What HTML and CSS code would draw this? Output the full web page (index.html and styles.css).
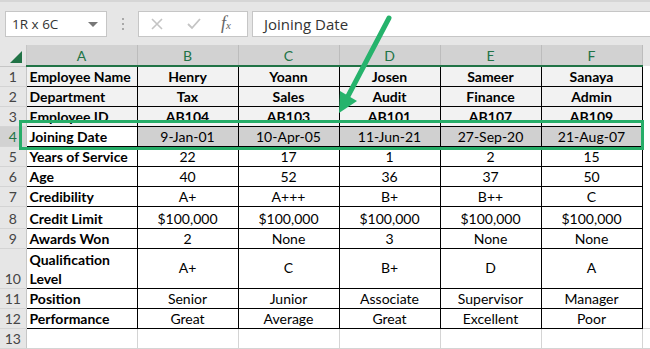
FILE: index.html
```html
<!DOCTYPE html>
<html lang="en">
<head>
  <meta charset="UTF-8" />
  <title>Employee sheet</title>
  <link rel="stylesheet" href="styles.css">
</head>
<body>
  <div class="app">
    <!-- formula bar -->
    <div class="toolbar">
      <div class="namebox">
        <span>1R x 6C</span>
        <span class="drop"></span>
      </div>
      <div class="grip"><i></i><i></i><i></i></div>
      <div class="fxbox">
        <svg width="12" height="12" viewBox="0 0 12 12"><path d="M1 1 L11 11 M11 1 L1 11" stroke="#c4c4c4" stroke-width="1.6" fill="none"/></svg>
        <svg width="14" height="12" viewBox="0 0 14 12"><path d="M1 6 L5 10 L13 1" stroke="#c4c4c4" stroke-width="1.8" fill="none"/></svg>
        <span class="fx">f<sub>x</sub></span>
      </div>
      <div class="formula">Joining Date</div>
    </div>

    <!-- grid -->
    <div class="sheet">
      <table class="grid">
        <colgroup>
          <col class="c-row"><col class="c-a"><col class="c-n"><col class="c-n"><col class="c-n"><col class="c-n"><col class="c-n"><col class="c-rest">
        </colgroup>
        <thead>
          <tr>
            <th class="corner"><span class="tri"></span></th>
            <th class="col">A</th><th class="col">B</th><th class="col">C</th><th class="col">D</th><th class="col">E</th><th class="col">F</th>
            <th class="rest"></th>
          </tr>
        </thead>
        <tbody>
          <tr class="top">
            <th>1</th><td class="lbl">Employee Name</td><td class="b">Henry</td><td class="b">Yoann</td><td class="b">Josen</td><td class="b">Sameer</td><td class="b">Sanaya</td><td class="rest"></td>
          </tr>
          <tr class="top">
            <th>2</th><td class="lbl">Department</td><td class="b">Tax</td><td class="b">Sales</td><td class="b">Audit</td><td class="b">Finance</td><td class="b">Admin</td><td class="rest"></td>
          </tr>
          <tr class="top">
            <th>3</th><td class="lbl">Employee ID</td><td class="b">AB104</td><td class="b">AB103</td><td class="b">AB101</td><td class="b">AB107</td><td class="b">AB109</td><td class="rest"></td>
          </tr>
          <tr class="sel">
            <th>4</th><td class="lbl">Joining Date</td><td>9-Jan-01</td><td>10-Apr-05</td><td>11-Jun-21</td><td>27-Sep-20</td><td>21-Aug-07</td><td class="rest"></td>
          </tr>
          <tr>
            <th>5</th><td class="lbl">Years of Service</td><td>22</td><td>17</td><td>1</td><td>2</td><td>15</td><td class="rest"></td>
          </tr>
          <tr>
            <th>6</th><td class="lbl">Age</td><td>40</td><td>52</td><td>36</td><td>37</td><td>50</td><td class="rest"></td>
          </tr>
          <tr>
            <th>7</th><td class="lbl">Credibility</td><td>A+</td><td>A+++</td><td>B+</td><td>B++</td><td>C</td><td class="rest"></td>
          </tr>
          <tr class="r22">
            <th>8</th><td class="lbl">Credit Limit</td><td>$100,000</td><td>$100,000</td><td>$100,000</td><td>$100,000</td><td>$100,000</td><td class="rest"></td>
          </tr>
          <tr>
            <th>9</th><td class="lbl">Awards Won</td><td>2</td><td>None</td><td>3</td><td>None</td><td>None</td><td class="rest"></td>
          </tr>
          <tr class="r40">
            <th>10</th><td class="lbl wrap">Qualification Level</td><td class="mid">A+</td><td class="mid">C</td><td class="mid">B+</td><td class="mid">D</td><td class="mid">A</td><td class="rest"></td>
          </tr>
          <tr>
            <th>11</th><td class="lbl">Position</td><td>Senior</td><td>Junior</td><td>Associate</td><td>Supervisor</td><td>Manager</td><td class="rest"></td>
          </tr>
          <tr>
            <th>12</th><td class="lbl">Performance</td><td>Great</td><td>Average</td><td>Great</td><td>Excellent</td><td>Poor</td><td class="rest"></td>
          </tr>
          <tr class="empty">
            <th>13</th><td></td><td></td><td></td><td></td><td></td><td></td><td class="rest"></td>
          </tr>
        </tbody>
      </table>

      <!-- callout over row 4 -->
      <div class="highlight"></div>
      <svg class="arrow" width="650" height="349" viewBox="0 0 650 349">
        <line x1="389" y1="18" x2="347" y2="98" stroke="#26b36c" stroke-width="5" stroke-linecap="round"/>
        <polygon points="339,113 357,101 340,91" fill="#26b36c"/>
      </svg>
    </div>
  </div>
</body>
</html>
```

FILE: styles.css
```css
* { box-sizing: border-box; margin: 0; padding: 0; }

body {
  width: 650px;
  height: 349px;
  overflow: hidden;
  background: #fff;
  font-family: Lato, "Liberation Sans", sans-serif;
  color: #000;
}

.app { position: relative; width: 650px; height: 349px; }

/* formula bar */
.toolbar {
  height: 45px;
  background: #e6e6e6;
  border-top: 2px solid #d6d6d6;
  display: flex;
  align-items: flex-start;
  padding: 9px 0 0 5px;
}
.namebox {
  width: 102px;
  height: 26px;
  background: #fff;
  border: 1px solid #c6c6c6;
  display: flex;
  align-items: center;
  justify-content: space-between;
  padding: 0 8px 0 6px;
  font-family: "Open Sans", "Noto Sans", sans-serif;
  font-size: 13.5px;
  color: #333;
}
.drop {
  width: 0; height: 0;
  border-left: 5px solid transparent;
  border-right: 5px solid transparent;
  border-top: 5px solid #777;
}
.grip {
  width: 31px;
  height: 26px;
  display: flex;
  flex-direction: column;
  align-items: center;
  justify-content: center;
  gap: 3px;
}
.grip i { width: 2px; height: 2px; background: #a8a8a8; display: block; }
.fxbox {
  width: 110px;
  height: 26px;
  background: #fff;
  border: 1px solid #c6c6c6;
  display: flex;
  align-items: center;
  padding-left: 12px;
  gap: 24px;
}
.fx {
  font-family: "Liberation Serif", serif;
  font-style: italic;
  font-size: 18px;
  color: #666;
  margin-left: -4px;
  line-height: 18px;
}
.fx sub { font-size: 11px; vertical-align: 0; }
.formula {
  margin-left: 4px;
  flex: 1;
  height: 26px;
  background: #fff;
  border: 1px solid #c6c6c6;
  border-right: none;
  padding-left: 11px;
  line-height: 24px;
  font-family: "Open Sans", "Noto Sans", sans-serif;
  font-size: 15px;
  color: #333;
}

/* sheet */
.sheet { position: relative; }

.grid {
  border-collapse: collapse;
  table-layout: fixed;
  width: 650px;
  font-size: 14px;
}
.c-row { width: 26px; }
.c-a { width: 111px; }
.c-n { width: 101px; }
.c-rest { width: 8px; }

.grid thead th {
  height: 21px;
  background: #d2d2d2;
  border-right: 1px solid #bcbcbc;
  border-bottom: 2px solid #217346;
  font-weight: normal;
  font-size: 14px;
  color: #217346;
  padding-top: 1px;
}
.grid thead th.corner {
  background: #e6e6e6;
  border-bottom: 1px solid #c6c6c6;
  border-right: 1px solid #c6c6c6;
  position: relative;
}
.tri {
  position: absolute;
  right: 4px;
  bottom: 3px;
  width: 0; height: 0;
  border-left: 12px solid transparent;
  border-bottom: 12px solid #217346;
}
.grid thead th.rest { background: #e6e6e6; border: none; }

.grid tbody tr { height: 20px; }
.grid tbody tr.r22 { height: 22px; }
.grid tbody tr.r40 { height: 40px; }

.grid tbody th {
  background: #e6e6e6;
  border-bottom: 1px solid #d4d4d4;
  border-right: 1px solid #c6c6c6;
  font-weight: normal;
  font-size: 14px;
  color: #444;
  text-align: center;
  vertical-align: bottom;
  line-height: 18px;
}
.grid tbody tr.sel th { background: #d2d2d2; color: #217346; }

.grid td {
  border: 1px solid #000;
  text-align: center;
  vertical-align: bottom;
  line-height: 18px;
  padding: 0 2px;
  white-space: nowrap;
  overflow: hidden;
}
.grid td.mid { vertical-align: middle; }
.grid td.lbl { text-align: left; font-weight: bold; padding-left: 3px; }
.grid td.wrap { white-space: normal; line-height: 19px; }
.grid td.b { font-weight: bold; }
.grid tr.top td { background: #f2f2f2; }
.grid tr.sel td { background: #d0d0d0; }
.grid tr.sel td.lbl { background: #fff; }
.grid td.rest, .grid tr.top td.rest, .grid tr.sel td.rest { background: #fff; border: none; border-left: 1px solid #d4d4d4; }
.grid tr.empty td { border: 1px solid #d4d4d4; }

.highlight {
  position: absolute;
  left: 19px;
  top: 75px;
  width: 625px;
  height: 30px;
  border: 3px solid #26ad68;
}
.arrow {
  position: absolute;
  left: 0;
  top: -45px;
  pointer-events: none;
}
```
